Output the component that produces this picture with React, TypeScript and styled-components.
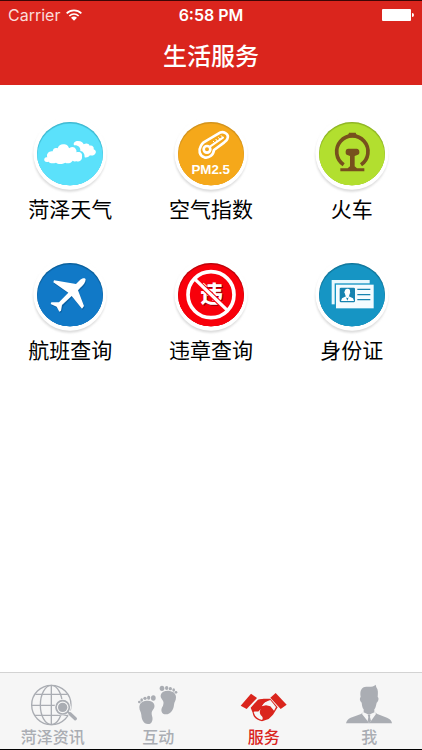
import React from 'react';
import styled, { createGlobalStyle } from 'styled-components';

const RED = '#da251d';
const MUTED = '#aaadb3';

const GlobalStyle = createGlobalStyle`
  * { box-sizing: border-box; }
  body { margin: 0; background: #fff; }
`;

const Screen = styled.div`
  display: flex;
  flex-direction: column;
  min-height: 100vh;
  background: #fff;
  color: #000;
  border-top: 1px solid #3c0605;
  border-bottom: 1px solid #000;
  font-family: Inter, 'Noto Sans CJK SC', sans-serif;
`;

const Header = styled.header`
  background: ${RED};
  color: #fff;
`;

const StatusBar = styled.div`
  display: grid;
  grid-template-columns: 1fr auto 1fr;
  align-items: center;
  height: 28px;
  padding: 0 8px;
  font-size: 16px;
  line-height: 28px;
`;

const Carrier = styled.div`
  display: flex;
  align-items: center;
  gap: 6px;
  color: #fbdcda;
`;

const Time = styled.time`
  font-weight: 600;
`;

const Battery = styled.svg`
  justify-self: end;
`;

const Title = styled.h1`
  margin: 0;
  height: 56px;
  font-size: 24px;
  line-height: 56px;
  font-weight: 500;
  text-align: center;
`;

const Services = styled.main`
  flex: 1;
  display: grid;
  grid-template-columns: repeat(3, 1fr);
  align-content: start;
  row-gap: 29px;
  padding-top: 25px;
`;

const Service = styled.a`
  display: flex;
  flex-direction: column;
  align-items: center;
  color: inherit;
  text-decoration: none;
  font-size: 21px;
  line-height: 24px;
`;

const TabBar = styled.nav`
  display: grid;
  grid-template-columns: repeat(4, 1fr);
  height: 77px;
  border-top: 1px solid #d3d3d3;
  background: #f6f6f6;
`;

const Tab = styled.a<{ $active?: boolean }>`
  display: flex;
  flex-direction: column;
  align-items: center;
  color: ${(p) => (p.$active ? RED : MUTED)};
  text-decoration: none;
  font-size: 16px;
  line-height: 16px;
  font-weight: 500;
`;

function Disc({ id, color, shade, children }: {
  id: string; color: string; shade: string; children: React.ReactNode;
}) {
  return (
    <svg width="92" height="88" viewBox="0 0 276 264" aria-hidden="true">
      <defs>
        <filter id={`${id}-soft`} x="-10%" y="-10%" width="120%" height="120%">
          <feGaussianBlur stdDeviation="3" />
        </filter>
        <clipPath id={`${id}-clip`}>
          <ellipse cx="138" cy="131" rx="99" ry="95" />
        </clipPath>
      </defs>
      <circle cx="137" cy="136" r="109" fill="#dadada" filter={`url(#${id}-soft)`} />
      <circle cx="138" cy="129" r="110" fill="#fff" />
      <g clipPath={`url(#${id}-clip)`}>
        <rect x="30" y="30" width="216" height="210" fill={shade} />
        <ellipse cx="138" cy="137" rx="99" ry="97" fill={color} filter={`url(#${id}-soft)`} />
        <ellipse cx="138" cy="138" rx="98" ry="97" fill={color} />
      </g>
      {children}
    </svg>
  );
}

const WeatherIcon = () => (
  <Disc id="weather" color="#5be1fb" shade="#2fa9c2">
    <path fill="#fff" d="M150 106C147 98 153 93 162 93C172 93 177 97 179 103C187 98 195 101 197 107C205 105 211 111 209 118C217 121 218 130 211 134C207 137 201 137 198 136C193 142 187 144 182 142C182 131 178 124 169 123C170 112 163 105 150 106Z" />
    <path fill="#fff" d="M86 124C87 115 94 112 101 115C104 104 113 101 122 103C130 104 134 110 135 115C144 109 151 110 155 117C158 121 158 124 157 127C169 124 176 130 174 140C175 150 168 155 157 154C151 155 148 153 146 152C142 159 131 162 124 158C114 164 101 163 96 158C87 161 77 160 74 155C64 158 59 152 61 147C62 143 66 142 70 142C66 132 75 122 86 124Z" />
  </Disc>
);

const AirIcon = () => (
  <Disc id="air" color="#f5a81a" shade="#c58918">
    <path d="M116 97L160 71C174 60 194 72 187 87C185 92 181 94 177 98L147 120C145 136 132 145 118 142C103 137 100 121 107 109C109 104 112 100 116 97Z" fill="none" stroke="#fff" strokeWidth="8" strokeLinejoin="round" />
    <circle cx="126" cy="118" r="10" fill="none" stroke="#fff" strokeWidth="8" />
    <path d="M136 109L174 83" stroke="#fff" strokeWidth="6" strokeLinecap="round" />
    <path d="M144 93L149 98M152 87L157 93M160 82L165 88M168 76L173 82" stroke="#fff" strokeWidth="3" />
    <text x="137" y="192" textAnchor="middle" fill="#fff" fontFamily="'Liberation Sans', sans-serif" fontWeight="700" fontSize="40">PM2.5</text>
  </Disc>
);

const TrainIcon = () => (
  <Disc id="train" color="#b2df2f" shade="#80a51d">
    <path d="M113 164A47 47 0 1 1 165 164" fill="none" stroke="#77501d" strokeWidth="11" />
    <path fill="#77501d" d="M124 82L129 68H149L154 82ZM126 116H152Q160 117 160 125V130Q159 135 152 136L146 138V169L153 175H175V184H103V175H125L132 169V138L126 136Q119 135 119 130V124Q119 117 126 116Z" />
  </Disc>
);

const FlightIcon = () => (
  <Disc id="flight" color="#1179c7" shade="#0a568d">
    <path fill="#064b85" opacity=".5" transform="translate(2 4)" d="M156 99L170 85C177 79 185 80 185 85C185 94 178 104 169 110L162 118L180 165L174 173L143 135L116 162L111 179L106 182L98 167L80 159L82 154L105 154L133 125L88 94L90 88Z" />
    <path fill="#fff" d="M156 99L168 87C175 80 184 80 185 85C185 94 178 104 169 110L162 118L180 165L174 173L143 135L114 162L111 179L106 182L98 167L80 159L82 154L105 154L133 125L88 94L90 88Z" />
  </Disc>
);

const ViolationIcon = () => (
  <Disc id="violation" color="#f8000b" shade="#a8000a">
    <g fontFamily="'Noto Sans CJK SC', sans-serif" fontWeight="900" fontSize="68" textAnchor="middle">
      <text x="143" y="157" fill="#8e0008">违</text>
      <text x="140" y="154" fill="#fff">违</text>
    </g>
    <path d="M90 85L186 177" stroke="#f8000b" strokeWidth="16" />
    <path d="M88 83L188 179" stroke="#fff" strokeWidth="10" />
    <circle cx="138" cy="131" r="69" fill="none" stroke="#fff" strokeWidth="11" />
  </Disc>
);

const IdIcon = () => (
  <Disc id="identity" color="#1695c4" shade="#0d6a8c">
    <rect x="77" y="87" width="114" height="73" fill="#e8f8fd" />
    <rect x="86" y="97" width="120" height="78" fill="#1695c4" />
    <rect x="90" y="101" width="113" height="71" fill="#f4fcff" />
    <rect x="101" y="110" width="46" height="44" rx="4" fill="#1583b0" />
    <path fill="#fff" d="M116 121Q117 112 124 113Q133 112 132 122Q134 126 131 128Q130 134 128 136L141 142L144 150H105L108 142L120 136Q117 133 117 128Q113 125 116 121Z" />
    <path fill="#1583b0" d="M120 139L124 149L128 139L125 141H123Z" />
    <path d="M154 115H193M154 131H193M154 146H193" stroke="#1583b0" strokeWidth="4" />
  </Disc>
);

function TabIcon({ children }: { children: React.ReactNode }) {
  return (
    <svg width="96" height="56" viewBox="15 24 288 168" fill="currentColor" aria-hidden="true">
      {children}
    </svg>
  );
}

const GlobeIcon = () => (
  <TabIcon>
    <g fill="none" stroke="currentColor" strokeWidth="4">
      <circle cx="154" cy="120" r="59" />
      <ellipse cx="154" cy="120" rx="33" ry="59" />
      <path d="M154 61V179M106 88H202M95 121H213M104 151H204" />
    </g>
    <circle cx="188" cy="127" r="25" fill="#f6f6f6" />
    <path d="M203 139L227 161" stroke="#f6f6f6" strokeWidth="15" />
    <circle cx="188" cy="127" r="20" fill="none" stroke="currentColor" strokeWidth="5" />
    <circle cx="188" cy="127" r="14" />
    <path d="M203 140L211 147" stroke="currentColor" strokeWidth="5" />
    <path d="M210 146L226 161" stroke="currentColor" strokeWidth="10" strokeLinecap="round" />
  </TabIcon>
);

const FeetIcon = () => (
  <TabIcon>
    <path d="M103 127C103 112 116 107 129 107C145 107 152 119 147 130C143 137 138 140 141 152C146 166 139 178 129 177C115 177 110 163 109 150C108 140 103 137 103 127Z" />
    <ellipse cx="145" cy="99" rx="7" ry="8" />
    <ellipse cx="131" cy="98" rx="5" ry="6" />
    <ellipse cx="120" cy="100" rx="5" ry="5" />
    <ellipse cx="110" cy="105" rx="4" ry="5" />
    <ellipse cx="103" cy="111" rx="4" ry="4" />
    <path d="M213 97C213 83 201 77 187 77C171 77 163 89 169 100C174 108 178 111 174 122C164 136 171 148 182 148C198 148 206 133 207 119C208 111 213 107 213 97Z" />
    <ellipse cx="171" cy="70" rx="7" ry="8" />
    <ellipse cx="185" cy="69" rx="5" ry="6" />
    <ellipse cx="196" cy="71" rx="5" ry="5" />
    <ellipse cx="206" cy="75" rx="4" ry="5" />
    <ellipse cx="213" cy="82" rx="4" ry="4" />
  </TabIcon>
);

const HandshakeIcon = () => (
  <TabIcon>
    <path d="M120 86L138 99L107 132L89 122ZM194 84L227 119L209 132L178 98Z" />
    <path d="M141 104L158 101H178L200 127L186 149L173 162L153 169C138 165 127 158 125 143L119 128Z" />
    <path d="M172 107L178 105L195 126L189 137L178 124L165 121L152 124L158 113Z" fill="#f6f6f6" />
    <path d="M128 141C132 138 139 141 143 139L149 132C144 141 147 148 152 153C156 157 156 161 153 165C139 161 131 154 128 141Z" fill="#f6f6f6" />
    <path d="M143 104L158 102L172 105C158 112 153 122 145 134C139 140 127 137 120 129Z" />
  </TabIcon>
);

const PersonIcon = () => (
  <TabIcon>
    <path d="M134 96C131 77 136 66 151 65C163 65 173 66 179 59L181 67C187 74 186 84 185 96C190 99 187 110 182 113C180 123 178 130 175 133V141L184 147L213 158C224 163 227 168 228 175H90C92 167 96 162 104 158L135 147L143 141V133C139 129 138 121 137 113C131 109 130 99 134 96Z" />
    <path d="M141 141L159 149L177 141L180 147L160 175L138 147Z" fill="#f6f6f6" />
    <path d="M155 149H163L162 156L165 168L160 175L155 168L157 156Z" />
  </TabIcon>
);

const services = [
  { label: '菏泽天气', href: '#weather', Icon: WeatherIcon },
  { label: '空气指数', href: '#air', Icon: AirIcon },
  { label: '火车', href: '#train', Icon: TrainIcon },
  { label: '航班查询', href: '#flight', Icon: FlightIcon },
  { label: '违章查询', href: '#violation', Icon: ViolationIcon },
  { label: '身份证', href: '#identity', Icon: IdIcon },
];

const tabs = [
  { label: '菏泽资讯', href: '#news', Icon: GlobeIcon },
  { label: '互动', href: '#interact', Icon: FeetIcon },
  { label: '服务', href: '#services', Icon: HandshakeIcon, active: true },
  { label: '我', href: '#me', Icon: PersonIcon },
];

export default function App() {
  return (
    <Screen lang="zh-CN">
      <GlobalStyle />
      <Header>
        <StatusBar>
          <Carrier>
            Carrier
            <svg width="16" height="12" viewBox="0 0 48 36" fill="none" stroke="#fff" strokeWidth="5" aria-hidden="true">
              <path d="M2 13C14 1 34 1 46 13M10 21C18 13 30 13 38 21" />
              <path d="M15 26C20 21 28 21 33 26L24 35Z" fill="#fff" stroke="none" />
            </svg>
          </Carrier>
          <Time>6:58 PM</Time>
          <Battery width="32" height="14" viewBox="0 0 32 14" fill="#fff" role="img" aria-label="Battery full">
            <rect x="0" y="1" width="29" height="12" rx="1" />
            <path d="M30 5Q32 5 32 7Q32 9 30 9Z" />
          </Battery>
        </StatusBar>
        <Title>生活服务</Title>
      </Header>
      <Services>
        {services.map(({ label, href, Icon }) => (
          <Service key={label} href={href}>
            <Icon />
            <span>{label}</span>
          </Service>
        ))}
      </Services>
      <TabBar>
        {tabs.map(({ label, href, Icon, active }) => (
          <Tab key={label} href={href} $active={active} aria-current={active ? 'page' : undefined}>
            <Icon />
            <span>{label}</span>
          </Tab>
        ))}
      </TabBar>
    </Screen>
  );
}
